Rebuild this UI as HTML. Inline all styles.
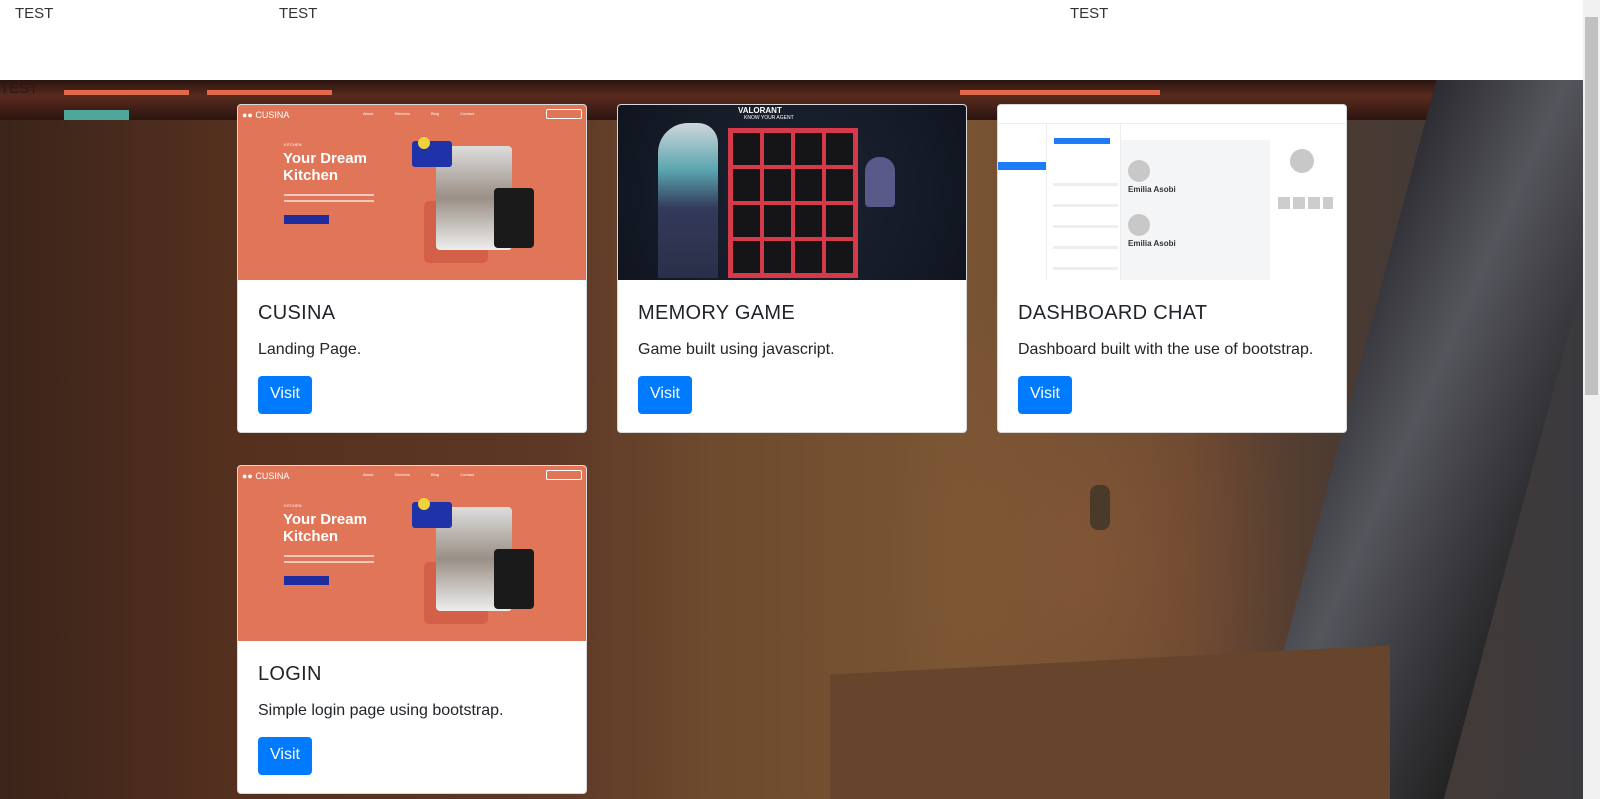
<!DOCTYPE html>
<html style="overflow:hidden"><head><meta charset="utf-8"><style>
*{margin:0;padding:0;box-sizing:border-box}
html,body{width:1600px;height:799px;overflow:hidden}
body{font-family:"Liberation Sans",sans-serif;position:relative;background:#3a2418}
.hdr{position:absolute;left:0;top:0;width:1583px;height:80px;background:#fff;z-index:2}
.hdr span{position:absolute;top:5px;font-size:15px;color:#333}
.bg{position:absolute;left:0;top:80px;width:1583px;height:719px;overflow:hidden;
background:
radial-gradient(ellipse 200px 300px at 1090px 480px,rgba(150,100,60,.4),transparent),
linear-gradient(90deg,#3b241a 0,#55301f 15%,#5e3826 35%,#6e4a2e 45%,#7a5533 60%,#6a4630 75%,#4a3a32 85%,#3a3a3e 100%)}
.strip{position:absolute;left:0;top:0;width:100%;height:40px;background:linear-gradient(180deg,#2a1410,#5a2a1e 40%,#2a1510)}
.bar{position:absolute;height:5px;background:#e06a4a}
.gun{position:absolute;left:1340px;top:-20px;width:200px;height:760px;background:linear-gradient(100deg,#2a2a30,#55555c 40%,#3a3a40 70%,#222);transform:skewX(-15deg)}
.sb{position:absolute;left:1583px;top:0;width:17px;height:799px;background:#f1f1f1;z-index:3}
.sb .th{position:absolute;left:2px;top:17px;width:13px;height:378px;background:#c1c1c1}
.card{position:absolute;width:350px;height:329px;background:#fff;border-radius:4px;overflow:hidden;border:1px solid rgba(0,0,0,.15);z-index:1}
.img{position:relative;height:175px;overflow:hidden}
.body{padding:20px}
.body h5{font-size:20px;font-weight:400;color:#212529;margin-top:2px;letter-spacing:.3px}
.body p{font-size:16px;color:#212529;margin-top:16px}
.btn{display:inline-block;margin-top:17px;background:#007bff;color:#fff;font-size:16px;padding:9px 12px;border-radius:4px;height:38px}
.ab{position:absolute}
</style></head><body>
<div class="hdr"><span style="left:15px">TEST</span><span style="left:279px">TEST</span><span style="left:1070px">TEST</span></div>
<div class="bg">
<div class="strip"></div>
<div class="bar" style="left:64px;top:10px;width:125px"></div>
<div class="bar" style="left:207px;top:10px;width:125px"></div>
<div class="bar" style="left:960px;top:10px;width:200px"></div>
<div class="ab" style="left:64px;top:30px;width:65px;height:10px;background:#4fa79b"></div>
<div class="ab" style="left:0;top:0;font-size:15px;color:#2a1a14">TEST</div>
<div class="gun"></div>
<div class="ab" style="left:1090px;top:405px;width:20px;height:45px;background:#4a3a2a;border-radius:8px"></div>
<div class="ab" style="left:830px;top:580px;width:560px;height:200px;background:#66452c;transform:skewY(-3deg)"></div>
</div>
<div class="sb"><div class="th"></div></div>

<!-- card 1 -->
<div class="card" style="left:237px;top:104px">
<div class="img" style="background:#e07558">
<div class="ab" style="left:4px;top:5px;color:#fff;font-size:9px">&#9679;&#9679; CUSINA</div>
<div class="ab" style="left:125px;top:6px;color:#fff;font-size:4px;word-spacing:20px">About Kitchens Blog Contact</div>
<div class="ab" style="left:308px;top:4px;width:36px;height:10px;border:1px solid #fff;border-radius:2px"></div>
<div class="ab" style="left:46px;top:37px;color:#fff;font-size:4px">KITCHEN</div>
<div class="ab" style="left:45px;top:45px;color:#fff;font-size:15px;font-weight:bold;line-height:17px">Your Dream<br>Kitchen</div>
<div class="ab" style="left:46px;top:89px;width:90px;height:8px;border-top:2px solid rgba(255,255,255,.6);border-bottom:2px solid rgba(255,255,255,.6)"></div>
<div class="ab" style="left:46px;top:110px;width:45px;height:9px;background:#1f2c9e"></div>
<div class="ab" style="left:186px;top:96px;width:64px;height:62px;background:#d4604a;border-radius:5px"></div>
<div class="ab" style="left:198px;top:41px;width:76px;height:104px;background:linear-gradient(180deg,#ddd,#9a8f86 50%,#eee);border-radius:4px"></div>
<div class="ab" style="left:174px;top:36px;width:40px;height:26px;background:#1f32a8;border-radius:3px"></div>
<div class="ab" style="left:180px;top:32px;width:12px;height:12px;background:#f0d23a;border-radius:50%"></div>
<div class="ab" style="left:256px;top:83px;width:40px;height:60px;background:#1a1a1a;border-radius:4px"></div>
</div>
<div class="body"><h5>CUSINA</h5><p>Landing Page.</p><span class="btn">Visit</span></div>
</div>

<!-- card 2 -->
<div class="card" style="left:617px;top:104px">
<div class="img" style="background:radial-gradient(circle at 50% 50%,#1d2533,#101520)">
<div class="ab" style="left:120px;top:1px;color:#fff;font-size:8px;font-weight:bold">VALORANT</div>
<div class="ab" style="left:126px;top:10px;color:#fff;font-size:5px">KNOW YOUR AGENT</div>
<div class="ab" style="left:40px;top:18px;width:60px;height:155px;background:linear-gradient(180deg,#cfd6dc,#5aa6b0 30%,#333a5a 55%,#2a2f48);border-radius:30px 20px 0 0"></div>
<div class="ab" style="left:247px;top:52px;width:30px;height:50px;background:#5a5a8a;border-radius:14px 14px 4px 4px"></div>
<div class="ab" style="left:110px;top:23px;width:130px;height:150px;background:#d63a4a;display:grid;grid-template-columns:repeat(4,1fr);grid-template-rows:repeat(4,1fr);gap:4px;padding:5px">
<i style="background:#151417"></i><i style="background:#151417"></i><i style="background:#151417"></i><i style="background:#151417"></i>
<i style="background:#151417"></i><i style="background:#151417"></i><i style="background:#151417"></i><i style="background:#151417"></i>
<i style="background:#151417"></i><i style="background:#151417"></i><i style="background:#151417"></i><i style="background:#151417"></i>
<i style="background:#151417"></i><i style="background:#151417"></i><i style="background:#151417"></i><i style="background:#151417"></i>
</div>
</div>
<div class="body"><h5>MEMORY GAME</h5><p>Game built using javascript.</p><span class="btn">Visit</span></div>
</div>

<!-- card 3 -->
<div class="card" style="left:997px;top:104px">
<div class="img" style="background:#fff">
<div class="ab" style="left:0;top:18px;width:350px;height:1px;background:#eee"></div>
<div class="ab" style="left:0;top:57px;width:48px;height:8px;background:#1c7cf8"></div>
<div class="ab" style="left:48px;top:18px;width:75px;height:157px;border-left:1px solid #eee;border-right:1px solid #eee"></div>
<div class="ab" style="left:56px;top:33px;width:56px;height:6px;background:#1c7cf8"></div>
<div class="ab" style="left:123px;top:35px;width:149px;height:140px;background:#f4f5f7"></div>
<div class="ab" style="left:130px;top:55px;width:22px;height:22px;border-radius:50%;background:#c8c8c8"></div>
<div class="ab" style="left:130px;top:109px;width:22px;height:22px;border-radius:50%;background:#c8c8c8"></div>
<div class="ab" style="left:130px;top:80px;font-size:8px;font-weight:bold;color:#333">Emilia Asobi</div>
<div class="ab" style="left:130px;top:134px;font-size:8px;font-weight:bold;color:#333">Emilia Asobi</div>
<div class="ab" style="left:292px;top:44px;width:24px;height:24px;border-radius:50%;background:#c8c8c8"></div>
<div class="ab" style="left:280px;top:92px;width:55px;height:12px;background:repeating-linear-gradient(90deg,#ccc 0 12px,transparent 12px 15px)"></div>
<div class="ab" style="left:55px;top:60px;width:65px;height:110px;background:repeating-linear-gradient(180deg,#fff 0 18px,#eee 18px 21px)"></div>
</div>
<div class="body"><h5>DASHBOARD CHAT</h5><p>Dashboard built with the use of bootstrap.</p><span class="btn">Visit</span></div>
</div>

<!-- card 4 -->
<div class="card" style="left:237px;top:465px">
<div class="img" style="background:#e07558">
<div class="ab" style="left:4px;top:5px;color:#fff;font-size:9px">&#9679;&#9679; CUSINA</div>
<div class="ab" style="left:125px;top:6px;color:#fff;font-size:4px;word-spacing:20px">About Kitchens Blog Contact</div>
<div class="ab" style="left:308px;top:4px;width:36px;height:10px;border:1px solid #fff;border-radius:2px"></div>
<div class="ab" style="left:46px;top:37px;color:#fff;font-size:4px">KITCHEN</div>
<div class="ab" style="left:45px;top:45px;color:#fff;font-size:15px;font-weight:bold;line-height:17px">Your Dream<br>Kitchen</div>
<div class="ab" style="left:46px;top:89px;width:90px;height:8px;border-top:2px solid rgba(255,255,255,.6);border-bottom:2px solid rgba(255,255,255,.6)"></div>
<div class="ab" style="left:46px;top:110px;width:45px;height:9px;background:#1f2c9e"></div>
<div class="ab" style="left:186px;top:96px;width:64px;height:62px;background:#d4604a;border-radius:5px"></div>
<div class="ab" style="left:198px;top:41px;width:76px;height:104px;background:linear-gradient(180deg,#ddd,#9a8f86 50%,#eee);border-radius:4px"></div>
<div class="ab" style="left:174px;top:36px;width:40px;height:26px;background:#1f32a8;border-radius:3px"></div>
<div class="ab" style="left:180px;top:32px;width:12px;height:12px;background:#f0d23a;border-radius:50%"></div>
<div class="ab" style="left:256px;top:83px;width:40px;height:60px;background:#1a1a1a;border-radius:4px"></div>
</div>
<div class="body"><h5>LOGIN</h5><p>Simple login page using bootstrap.</p><span class="btn">Visit</span></div>
</div>
</body></html>
